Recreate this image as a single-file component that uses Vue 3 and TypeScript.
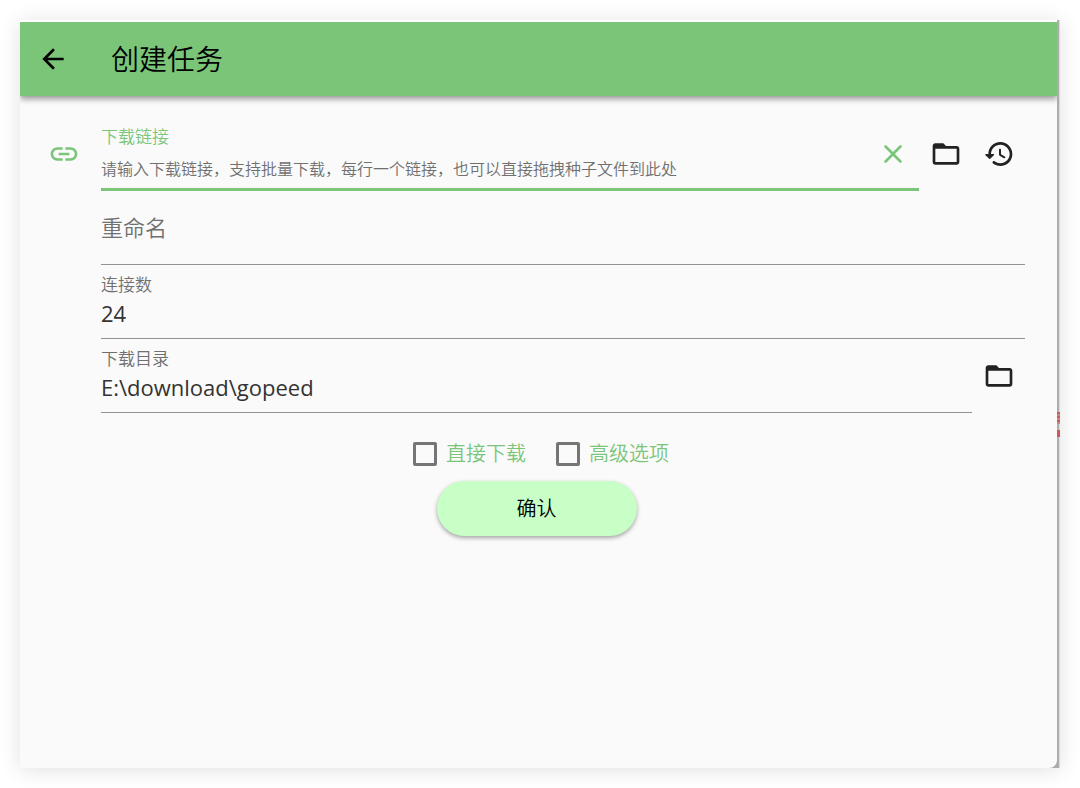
<script setup lang="ts">
import { ref } from 'vue'

const urls = ref('')
const rename = ref('')
const connections = ref('24')
const directory = ref('E:\\download\\gopeed')
const direct = ref(false)
const advanced = ref(false)

const folderPath =
  'M20 6h-8l-2-2H4c-1.1 0-1.99.9-1.99 2L2 18c0 1.1.9 2 2 2h16c1.1 0 2-.9 2-2V8c0-1.1-.9-2-2-2zm0 12H4V8h16v10z'
</script>

<template>
  <div class="page">
    <div class="frame">
      <span class="sliver sliver-upper" aria-hidden="true"></span>
      <span class="sliver sliver-lower" aria-hidden="true"></span>
      <main class="window">
        <header class="bar">
          <button class="icon-button" type="button">
            <svg viewBox="0 0 24 24"><path d="M20 11H7.83l5.59-5.59L12 4l-8 8 8 8 1.41-1.41L7.83 13H20v-2z" /></svg>
          </button>
          <h1>创建任务</h1>
        </header>

        <form class="body" @submit.prevent>
          <div class="row">
            <svg class="lead" viewBox="0 0 24 24">
              <path d="M3.9 12c0-1.71 1.39-3.1 3.1-3.1h4V7H7c-2.76 0-5 2.24-5 5s2.24 5 5 5h4v-1.9H7c-1.71 0-3.1-1.39-3.1-3.1zM8 13h8v-2H8v2zm9-6h-4v1.9h4c1.71 0 3.1 1.39 3.1 3.1s-1.39 3.1-3.1 3.1h-4V17h4c2.76 0 5-2.24 5-5s-2.24-5-5-5z" />
            </svg>
            <div class="field active">
              <div class="text">
                <label for="urls">下载链接</label>
                <input id="urls" v-model="urls" type="text" placeholder="请输入下载链接，支持批量下载，每行一个链接，也可以直接拖拽种子文件到此处" />
              </div>
              <button class="icon-button clear" type="button" @click="urls = ''">
                <svg viewBox="0 0 24 24"><path d="M18.3 5.71c-.39-.39-1.02-.39-1.41 0L12 10.59 7.11 5.7c-.39-.39-1.02-.39-1.41 0-.39.39-.39 1.02 0 1.41L10.59 12 5.7 16.89c-.39.39-.39 1.02 0 1.41.39.39 1.02.39 1.41 0L12 13.41l4.89 4.89c.39.39 1.02.39 1.41 0 .39-.39.39-1.02 0-1.41L13.41 12l4.89-4.89c.38-.38.38-1.02 0-1.4z" /></svg>
              </button>
            </div>
            <div class="actions">
              <button class="icon-button" type="button">
                <svg viewBox="0 0 24 24"><path :d="folderPath" /></svg>
              </button>
              <button class="icon-button" type="button">
                <svg viewBox="0 0 24 24">
                  <path d="M13.26 3C8.17 2.86 4 6.95 4 12H2.21c-.45 0-.67.54-.35.85l2.79 2.8c.2.2.51.2.71 0l2.79-2.8c.31-.31.09-.85-.36-.85H6c0-3.9 3.18-7.05 7.1-7 3.72.05 6.85 3.18 6.9 6.9.05 3.91-3.1 7.1-7 7.1-1.61 0-3.1-.55-4.28-1.48-.4-.31-.96-.28-1.32.08-.42.42-.39 1.13.08 1.49C9 20.29 10.91 21 13 21c5.05 0 9.14-4.17 9-9.26-.13-4.69-4.05-8.61-8.74-8.74zm-.51 5c-.41 0-.75.34-.75.75v3.68c0 .35.19.68.49.86l3.12 1.85c.36.21.82.09 1.03-.26.21-.36.09-.82-.26-1.03l-2.88-1.71v-3.4c0-.4-.34-.74-.75-.74z" />
                </svg>
              </button>
            </div>
          </div>

          <div class="row indented">
            <div class="field">
              <div class="text">
                <input id="rename" v-model="rename" type="text" placeholder="重命名" aria-label="重命名" />
              </div>
            </div>
          </div>

          <div class="row indented">
            <div class="field">
              <div class="text">
                <label for="connections">连接数</label>
                <input id="connections" v-model="connections" type="text" />
              </div>
            </div>
          </div>

          <div class="row indented">
            <div class="field">
              <div class="text">
                <label for="directory">下载目录</label>
                <input id="directory" v-model="directory" type="text" />
              </div>
            </div>
            <div class="actions">
              <button class="icon-button" type="button">
                <svg viewBox="0 0 24 24"><path :d="folderPath" /></svg>
              </button>
            </div>
          </div>

          <div class="options">
            <label><input v-model="direct" type="checkbox" />直接下载</label>
            <label><input v-model="advanced" type="checkbox" />高级选项</label>
          </div>
          <button class="confirm" type="submit">确认</button>
        </form>
      </main>
    </div>
  </div>
</template>

<style>
body {
  margin: 0;
  background: #fff;
}
</style>

<style scoped>
* {
  box-sizing: border-box;
}
.page {
  display: flex;
  min-height: 100vh;
  padding: 20px;
  font-family: "Open Sans", "Noto Sans CJK SC", sans-serif;
  font-weight: 350;
  color: #222;
}
.frame {
  position: relative;
  display: flex;
  flex: 1;
  min-width: 0;
  padding: 2px 3px 0 0;
  background:
    linear-gradient(to left, #dcdcdc 1px, #adadad 1px) right / 3px 100% no-repeat,
    linear-gradient(#adadad, #adadad) right bottom / 12px 12px no-repeat;
  box-shadow: 0 2px 20px rgba(0, 0, 0, 0.12);
}
.sliver {
  position: absolute;
  right: 0;
  width: 3px;
  background: #cc5a5c;
}
.sliver-upper {
  top: 392px;
  height: 12px;
  background: repeating-linear-gradient(#cc5a5c 0 2px, #c48a8b 2px 4px);
}
.sliver-lower {
  top: 410px;
  height: 7px;
}
.window {
  flex: 1;
  min-width: 0;
  background: #fafafa;
  border-radius: 0 0 8px 0;
}
.bar {
  display: flex;
  align-items: center;
  gap: 42px;
  height: 74px;
  padding: 0 17px;
  background: #7bc579;
  box-shadow: 0 3px 6px rgba(0, 0, 0, 0.4);
  clip-path: inset(0 0 -12px 0);
  color: #000;
}
h1 {
  margin: 0;
  font-size: 28px;
  line-height: 40px;
  font-weight: 350;
}
svg {
  display: block;
  width: 32px;
  height: 32px;
  fill: currentColor;
}
.icon-button {
  flex: none;
  padding: 0;
  border: 0;
  background: none;
  color: inherit;
  cursor: pointer;
}
.body {
  padding: 21px 32px 24px 28px;
}
.row {
  display: flex;
  align-items: center;
  height: 74px;
}
.indented {
  padding-left: 53px;
}
.lead {
  flex: none;
  margin-right: 21px;
  color: #7bc579;
}
.field {
  display: flex;
  align-items: center;
  flex: 1;
  min-width: 0;
  height: 74px;
  box-shadow: inset 0 -1px #929292;
}
.active {
  box-shadow: inset 0 -3px #7bc579;
}
.text {
  display: flex;
  flex-direction: column;
  flex: 1;
  min-width: 0;
  padding-bottom: 3px;
}
.active .text {
  gap: 8px;
}
.text label {
  font-size: 17px;
  line-height: 24px;
  color: #707070;
}
.active .text label,
.clear {
  color: #7bc579;
}
.clear {
  margin-right: 10px;
}
.text input {
  width: 100%;
  height: 32px;
  padding: 0;
  border: 0;
  outline: 0;
  background: none;
  font: inherit;
  font-size: 22px;
  font-weight: 400;
  color: #333;
}
.active .text input {
  height: 24px;
  font-size: 16px;
}
.text input::placeholder {
  color: #707070;
  font-weight: 350;
  opacity: 1;
}
.actions {
  display: flex;
  gap: 21px;
  padding: 0 10px 0 11px;
}
.options {
  display: flex;
  justify-content: center;
  gap: 30px;
  padding: 26px 0 12px 9px;
}
.options label {
  display: flex;
  align-items: center;
  gap: 9px;
  font-size: 20px;
  line-height: 30px;
  color: #7bc579;
}
.options input {
  appearance: none;
  width: 24px;
  height: 24px;
  margin: 0;
  border: 3px solid #757575;
  border-radius: 2px;
}
.options input:checked {
  background: #7bc579;
}
.confirm {
  display: block;
  width: 200px;
  height: 55px;
  margin: 0 auto;
  padding: 0 0 2px;
  border: 0;
  border-radius: 28px;
  background: #c8ffc6;
  box-shadow: 0 2px 4px rgba(0, 0, 0, 0.35);
  font: inherit;
  font-size: 20px;
  color: #000;
  cursor: pointer;
}
</style>
